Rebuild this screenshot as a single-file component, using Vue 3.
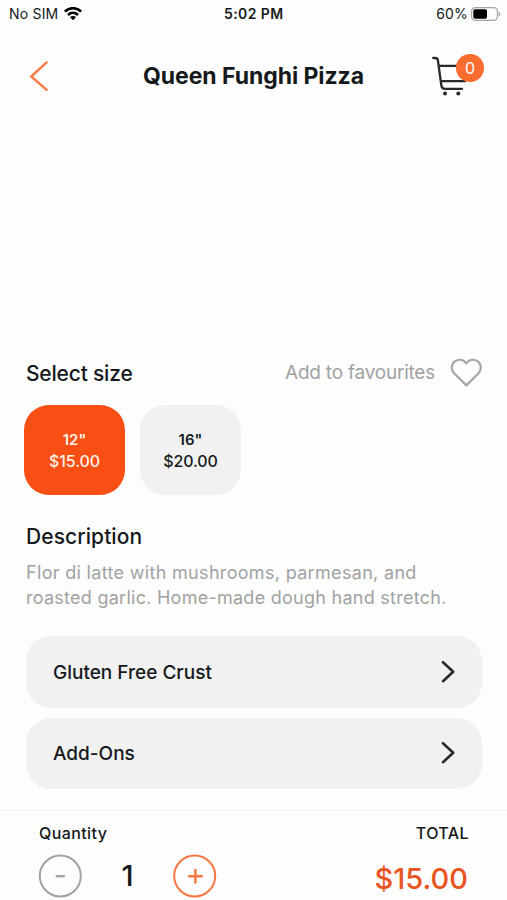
<script setup>
import { ref, computed } from 'vue'

const sizes = [
  { label: '12"', price: 15 },
  { label: '16"', price: 20 },
]
const extras = ['Gluten Free Crust', 'Add-Ons']
const selected = ref(0)
const quantity = ref(1)
const total = computed(() => '$' + (sizes[selected.value].price * quantity.value).toFixed(2))
</script>

<template>
  <div class="screen">
    <div class="status">
      <div class="carrier">
        <span class="sim">No SIM</span>
        <svg width="18" height="14" viewBox="0 0 18 14" fill="none" stroke="#000" stroke-width="2.7">
          <path d="M.9 4.6C5.5 .1 12.5 .1 17.1 4.6" />
          <path d="M4 8C6.9 5.2 11.1 5.2 14 8" />
          <path d="M9 13.2 5.9 10.1C7.7 8.6 10.3 8.6 12.1 10.1Z" fill="#000" stroke="none" />
        </svg>
      </div>
      <span class="clock">5:02 PM</span>
      <div class="power">
        <span class="percent">60%</span>
        <svg width="30" height="14" viewBox="0 0 30 14">
          <rect x=".6" y=".6" width="25.8" height="12.8" rx="3.6" fill="#fff" stroke="#a5a5a5" stroke-width="1.2" />
          <rect x="2.3" y="2.3" width="13.7" height="9.4" rx="1.8" fill="#000" />
          <path d="M27.7 4.7Q29.4 5.3 29.4 7T27.7 9.3Z" fill="#a5a5a5" />
        </svg>
      </div>
    </div>

    <header class="header">
      <svg class="back" width="20" height="32" viewBox="0 0 20 32" fill="none" stroke="#fa7a45" stroke-width="2.4" stroke-linecap="round">
        <path d="M17.6 2.3 2.2 16.5 17.6 29.9" />
      </svg>
      <h1 class="title">Queen Funghi Pizza</h1>
      <div class="cart">
        <svg width="54" height="46" viewBox="0 0 54 46" fill="none" stroke="#272b2e" stroke-width="2.3" stroke-linecap="round" stroke-linejoin="round">
          <path d="M2.2 5H4.3Q6.5 5 6.9 7.3L10.4 32.8Q10.9 35.8 13.8 35.8H31M7.8 12.8H29M10 28.2H34" />
          <circle cx="14" cy="40.4" r="2" fill="#272b2e" stroke="none" />
          <circle cx="27.3" cy="40.4" r="2" fill="#272b2e" stroke="none" />
        </svg>
        <span class="badge">0</span>
      </div>
    </header>

    <main class="content">
      <div class="size-head">
        <h2 class="heading select">Select size</h2>
        <div class="favourite">
          <span class="fav-text">Add to favourites</span>
          <svg width="32" height="30" viewBox="0 0 32 30" fill="none" stroke="#a6a6a6" stroke-width="2.2" stroke-linejoin="round">
            <path d="M16.3 27.4 4.1 15.2C.5 11.2 1.3 5.8 5.2 3.1 9 .7 13.5 1.6 16.3 5.4 19.1 1.6 23.6 .7 27.4 3.1 31.3 5.8 32.1 11.2 28.5 15.2Z" />
          </svg>
        </div>
      </div>
      <div class="sizes">
        <div v-for="(s, i) in sizes" :key="s.label" class="size" :class="{ active: i === selected }" @click="selected = i">
          <span class="inch">{{ s.label }}</span>
          <span class="price">${{ s.price.toFixed(2) }}</span>
        </div>
      </div>
      <h2 class="heading describe">Description</h2>
      <p class="text"><span class="line one">Flor di latte with mushrooms, parmesan, and</span> <span class="line two">roasted garlic. Home-made dough hand stretch.</span></p>
      <div class="extras">
        <div v-for="e in extras" :key="e" class="extra">
          <span class="extra-name">{{ e }}</span>
          <svg width="16" height="24" viewBox="0 0 16 24" fill="none" stroke="#272b2e" stroke-width="2.6" stroke-linecap="round" stroke-linejoin="round">
            <path d="M3 2.2 13.2 11.7 3 21.2" />
          </svg>
        </div>
      </div>
    </main>

    <footer class="footer">
      <div class="quantity">
        <span class="label qlabel">Quantity</span>
        <div class="stepper">
          <svg width="44" height="44" viewBox="0 0 44 44" fill="none" stroke="#a2a2a2" stroke-width="2" @click="quantity = Math.max(1, quantity - 1)">
            <circle cx="22.3" cy="22" r="20.5" />
            <path d="M17.8 22.2H26.8" stroke-width="2.4" />
          </svg>
          <span class="count">{{ quantity }}</span>
          <svg width="44" height="44" viewBox="0 0 44 44" fill="none" stroke="#f87640" stroke-width="2" @click="quantity++">
            <circle cx="21.7" cy="22" r="20.5" />
            <path d="M15.2 22.2H29.7M22.4 14.9V29.5" stroke-width="2.4" />
          </svg>
        </div>
      </div>
      <div class="total">
        <span class="label tlabel">TOTAL</span>
        <span class="amount">{{ total }}</span>
      </div>
    </footer>
  </div>
</template>

<style>
body {
  background: #fdfdfd;
}
</style>

<style scoped>
.screen {
  width: 507px;
  height: 900px;
  display: flex;
  flex-direction: column;
  overflow: hidden;
  box-sizing: border-box;
  background: #fdfdfd;
  color: #15191b;
  font-family: Inter, "Liberation Sans", sans-serif;
}
.screen * {
  box-sizing: border-box;
}
svg {
  display: block;
  flex: none;
}
h1, h2, p {
  margin: 0;
}
span, h1, h2 {
  white-space: nowrap;
}
.status {
  height: 27px;
  flex: none;
  display: grid;
  grid-template-columns: 1fr auto 1fr;
  align-items: center;
  padding: 0 6px 0 9px;
  font-size: 14px;
}
.carrier, .power {
  display: flex;
  align-items: center;
}
.carrier {
  gap: 6px;
}
.sim {
  letter-spacing: 0.2px;
}
.power {
  justify-content: flex-end;
  gap: 3px;
}
.percent {
  letter-spacing: 0.2px;
}
.clock {
  font-weight: 600;
  letter-spacing: 0.4px;
  margin-right: 2.5px;
}
.header {
  height: 97px;
  flex: none;
  display: grid;
  grid-template-columns: 60px 1fr 60px;
  align-items: center;
  padding: 0 22px 0 29px;
}
.title {
  font-size: 23px;
  line-height: 30px;
  font-weight: 700;
  letter-spacing: -0.06px;
  justify-self: center;
  margin-right: 7px;
}
.cart {
  position: relative;
  width: 54px;
  justify-self: end;
}
.badge {
  position: absolute;
  left: 25px;
  top: 1px;
  width: 28px;
  height: 28px;
  border-radius: 50%;
  background: #fb6c31;
  color: #fff;
  font-size: 16px;
  line-height: 28px;
  text-align: center;
}
.content {
  flex: 1;
  display: flex;
  flex-direction: column;
  padding: 232px 25px 0 26px;
}
.size-head {
  height: 34px;
  display: flex;
  align-items: center;
  justify-content: space-between;
}
.heading {
  font-size: 21px;
  line-height: 26px;
  font-weight: 500;
}
.select {
  padding-top: 2px;
  letter-spacing: -0.2px;
}
.favourite {
  display: flex;
  align-items: center;
  gap: 15px;
  color: #a2a2a2;
  font-size: 19px;
}
.fav-text {
  padding-bottom: 2px;
  letter-spacing: -0.22px;
}
.sizes {
  display: flex;
  gap: 15px;
  margin: 15px 0 0 -2px;
}
.size {
  width: 101px;
  height: 90px;
  border-radius: 25px;
  background: #f1f1f1;
  display: flex;
  flex-direction: column;
  align-items: center;
  justify-content: center;
  font-size: 16px;
  line-height: 22px;
  font-weight: 500;
}
.inch {
  font-size: 15px;
  line-height: 24px;
  margin-bottom: -2px;
  font-weight: 600;
}
.price {
  letter-spacing: -0.1px;
}
.size.active {
  background: #f94e14;
  color: #fff1e8;
}
.describe {
  margin-top: 29px;
  letter-spacing: 0.08px;
}
.text {
  margin-top: 10px;
  color: #a2a2a2;
  font-size: 18px;
  line-height: 25px;
}
.line {
  display: block;
}
.one {
  letter-spacing: 0.32px;
}
.two {
  letter-spacing: 0.26px;
}
.extras {
  display: flex;
  flex-direction: column;
  gap: 10px;
  margin-top: 26px;
}
.extra {
  height: 71.6px;
  border-radius: 25px;
  background: #f1f1f1;
  display: flex;
  align-items: center;
  justify-content: space-between;
  padding: 0 26px 0 27px;
  font-size: 19px;
  font-weight: 500;
}
.extra-name {
  padding-top: 1px;
}
.footer {
  height: 90px;
  flex: none;
  border-top: 1px solid #f2f2f2;
  display: flex;
  justify-content: space-between;
  padding: 11px 38px 0 38px;
}
.quantity, .total {
  display: flex;
  flex-direction: column;
}
.total {
  align-items: flex-end;
}
.label {
  font-size: 16px;
  line-height: 22px;
  font-weight: 500;
  letter-spacing: 0.4px;
}
.qlabel {
  padding-left: 1px;
}
.stepper {
  display: flex;
  align-items: center;
  gap: 39px;
  margin-top: 10px;
}
.count {
  width: 13px;
  font-size: 29px;
  line-height: 34px;
  font-weight: 500;
  text-align: center;
}
.amount {
  margin-top: 18px;
  margin-right: 1px;
  font-size: 29px;
  line-height: 34px;
  font-weight: 500;
  color: #e8551f;
}
</style>
